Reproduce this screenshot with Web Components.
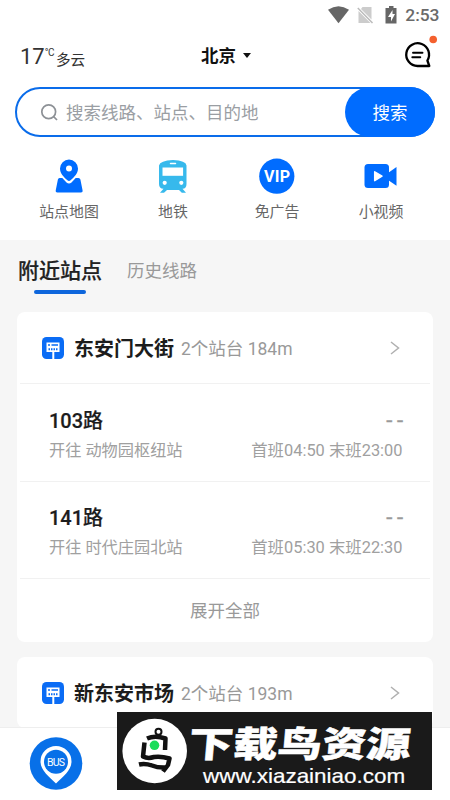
<!DOCTYPE html>
<html lang="zh-CN">
<head>
<meta charset="utf-8">
<title>附近站点</title>
<style>
body{margin:0;width:450px;height:800px;overflow:hidden;background:#fff;font-family:Roboto,"Noto Sans CJK SC",sans-serif}
</style>
</head>
<body>
<bus-app></bus-app>
<script>
const define=(name,html)=>{
  const t=document.createElement('template');
  customElements.define(name,class extends HTMLElement{
    constructor(){
      super();
      t.innerHTML=html;
      this.attachShadow({mode:'open'}).append(t.content.cloneNode(true));
    }
  });
};

define('status-bar',`<style>
:host{display:flex;height:30px;box-sizing:border-box;padding:0 10.5px 0 0;justify-content:flex-end;align-items:center;color:#6a6a6a;font-size:17.4px;font-weight:500;line-height:30px}
svg{display:block}
span{margin:0 0 0 7px}
</style>
<svg width="70" height="30" viewBox="328 0 70 30"><path d="M328 9.800Q338.500 2.500 349 9.800L338.500 23.200Z" fill="#666"/><path d="M362.500 7H371.500v12.500L361 9Z M358.500 11L370.500 23H358.500Z" fill="#ccc"/><path d="M357.800 8L372.500 23" stroke="#bbb" stroke-width="1.500"/><path d="M389 6h4.500v2h3v15.500H385.500V8h3.500Z" fill="#666"/><path d="M392.500 10l-4.500 7h3v4.500l4-7.500h-2.500Z" fill="#fff"/></svg><span>2:53</span>`);

define('city-header',`<style>
:host{display:grid;grid-template-columns:1fr auto 1fr;height:57px;align-items:center;padding:0 12px 0 20px;box-sizing:border-box;color:#333}
.w{display:flex;align-items:flex-end;height:42px;line-height:30px;margin-top:-10px}
.t{font-size:22px;line-height:36px}.c{font:10px/26px Roboto,sans-serif;margin:0 1.500px 9px 0;display:flex}.c i{font-style:normal;letter-spacing:-.5px}.d{font-size:14.6px;line-height:27px;margin-bottom:1px}
.city{display:flex;align-items:center;gap:7px;font-size:17.5px;font-weight:700;color:#111;line-height:26px;margin:-6px 6px 0 0}
.m{justify-self:end}
svg{display:block}
</style>
<div class="w"><span class="t">17</span><span class="c"><i>°</i>C</span><span class="d">多云</span></div>
<div class="city"><span>北京</span><svg width="8" height="5"><path d="M0 0h8L4 5Z" fill="#111"/></svg></div>
<svg class="m" width="35" height="57" viewBox="403 30 35 57"><path d="M417.500 66A11.400 11.400 0 1 1 427.400 60.500L429.300 66Z" fill="none" stroke="#000" stroke-width="2.300" stroke-linejoin="round"/><path d="M413 52.700h9.500M412.300 57.200h8" stroke="#000" stroke-width="1.900" stroke-linecap="round"/><circle cx="433.200" cy="39.500" r="3.800" fill="#f4602e"/></svg>`);

define('search-box',`<style>
:host{display:flex;box-sizing:border-box;margin:0 15px;height:50px;border:2px solid #0a6cea;border-radius:25px;align-items:center;color:#9a9ea3;font-size:17.5px;line-height:26px}
svg{margin:1px 7px 0 23px}
span{flex:1;margin-top:2px}
button{width:90px;height:50px;margin:-2px;border:0;border-radius:25px;background:#006cff;color:#fff;font:inherit;padding:2px 0 0}
</style>
<svg width="19" height="19" viewBox="0 0 19 19" fill="none" stroke="#8d9196" stroke-width="1.700"><circle cx="8.700" cy="8.700" r="6.900"/><path d="M13.500 13.500L17 17"/></svg><span>搜索线路、站点、目的地</span><button>搜索</button>`);

define('quick-link',`<style>
:host{display:flex;flex-direction:column;align-items:center;width:104px;color:#666;font-size:14.9px;line-height:22px}
::slotted(svg){display:block}
span{margin-top:3px}
</style><slot name="icon"></slot><span><slot></slot></span>`);

define('quick-links',`<style>
:host{display:flex;padding:20px 17px 0;height:83px;width:416px}
svg text{font:700 16px Roboto,sans-serif}
</style>
<quick-link><svg slot="icon" width="40" height="41" viewBox="49 157 40 41"><path fill="#006cff" d="M59.500 178H78.500q1.500 0 1.900 1.600l2.200 10.900q.4 2-1.600 2H57.300q-2 0-1.600-2l2.200-10.900q.300-1.600 1.600-1.600Z"/><path d="M60 175.500L66.500 182.500Q69 184.500 71.500 182.500L78 175.500Z" fill="#fff"/><path fill="#006cff" fill-rule="evenodd" d="M69 159.600a9 9 0 0 0-9 9c0 5 3.600 8.300 7.400 11.700q1.600 1.300 3.200 0c3.800-3.400 7.400-6.700 7.400-11.700A9 9 0 0 0 69 159.600Zm0 6a3 3 0 1 1 0 6a3 3 0 0 1 0-6Z"/></svg>站点地图</quick-link>
<quick-link><svg slot="icon" width="40" height="41" viewBox="153 157 40 41"><path fill="#37b9ec" fill-rule="evenodd" d="M159 165.500Q160 160.500 173 160Q186 160.500 186.500 165.500V184Q186.500 188.500 182.500 188.800L186 192.800H181.800L179 190H167L164 192.800H160L163.500 188.800Q159 188.500 159 184Z"/><path d="M162.500 167.500h20.600v8.300h-20.600Z" fill="#fff"/><path d="M170.500 163.600h5" stroke="#fff" stroke-width="1.500" stroke-linecap="round"/><circle cx="164.700" cy="182.800" r="2.100" fill="#fff"/><circle cx="181.300" cy="182.800" r="2.100" fill="#fff"/></svg>地铁</quick-link>
<quick-link><svg slot="icon" width="40" height="41" viewBox="257 157 40 41"><circle cx="276.800" cy="176.200" r="17.600" fill="#006cff"/><text x="264" y="182" textLength="26" fill="#fff">VIP</text></svg>免广告</quick-link>
<quick-link><svg slot="icon" width="40" height="41" viewBox="361 157 40 41"><rect x="364.500" y="164" width="24.500" height="24" rx="3.500" fill="#006cff"/><path d="M388 173L396.500 167V185.700L388 180Z" fill="#006cff"/><path d="M374.700 171.800L382 176.200L374.700 180.700Z" fill="#fff" stroke="#fff" stroke-width="1.500" stroke-linejoin="round"/></svg>小视频</quick-link>`);

define('tab-strip',`<style>
:host{display:flex;height:72px;box-sizing:border-box;padding:16px 18px 0;gap:25px;color:#999;font-size:17.5px;line-height:30px}
.on{color:#222;font-size:21px;font-weight:500;display:flex;flex-direction:column;align-items:center;-webkit-text-stroke:.2px}
.on::after{content:"";width:52px;height:3.500px;border-radius:2px;background:#0e66dc;margin-top:4px}
</style><div class="on">附近站点</div><div>历史线路</div>`);

define('station-card',`<style>
:host{display:block;margin:0 17px 15px;background:#fff;border-radius:8px}
.h{display:flex;height:71px;align-items:center;padding:0 32px 0 25px}
b{font-size:20px;font-weight:700;color:#1c1c1c;margin:3px 7px 0 10px;line-height:30px}
.i{flex:1;font-size:17.500px;line-height:30px;color:#999;margin-top:3px}
svg{display:block;margin-top:1px}
</style>
<div class="h"><svg width="22" height="22"><rect width="22" height="22" rx="4.500" fill="#0a6cf5"/><path d="M4.500 5.500h13v9.500H12.300V22h-2V15H4.500Z" fill="#fff"/><path d="M6 8h2M9.500 8h6.500" stroke="#0a6cf5" stroke-width="1.700"/><path d="M6.500 12.300h9.500" stroke="#0a6cf5" stroke-width="2" stroke-dasharray="1.500 1"/></svg><b><slot name="name"></slot></b><span class="i"><slot name="info"></slot></span><svg width="12" height="16" fill="none" stroke="#b0b0b0" stroke-width="1.500"><path d="M2 2l7.500 6l-7.500 6"/></svg></div>
<slot></slot>`);

define('bus-line',`<style>
:host{display:grid;grid-template-columns:auto auto;justify-content:space-between;align-content:start;height:97.500px;box-sizing:border-box;margin:0 3px;padding:21.500px 27.5px 0 29px;border-top:1px solid #f1f1f1;color:#a0a0a0;font-size:16.2px;line-height:30px}
.n{font-size:20px;font-weight:500;color:#1c1c1c;-webkit-text-stroke:.2px}
.e{display:flex;justify-content:flex-end;font-size:22px;letter-spacing:4.500px;margin-right:-5px;color:#999;-webkit-text-stroke:.4px}
.h{font-size:16.400px}
</style><span class="n"><slot></slot></span><span class="e">--</span><span><slot name="to"></slot></span><span class="h"><slot name="hours"></slot></span>`);

define('expand-row',`<style>
:host{display:block;height:64px;margin:0 3px;border-top:1px solid #f1f1f1;text-align:center;font-size:17.5px;line-height:65px;color:#999;box-sizing:border-box}
</style><slot></slot>`);

define('bottom-nav',`<style>
:host{display:flex;position:absolute;left:0;top:727px;width:450px;height:73px;background:#fff;border-top:1px solid #eee;box-sizing:border-box;padding:9px 29px}
text{font:10.500px Roboto,sans-serif}
</style><svg width="54" height="54"><circle cx="27" cy="26.500" r="26.300" fill="#0870e8"/><path d="M27 9A15.500 15.500 0 0 0 11.500 24.500C11.500 33.500 20 39.500 27 46.500C34 39.500 42.500 33.500 42.500 24.500A15.500 15.500 0 0 0 27 9Z" fill="#fff"/><circle cx="27" cy="24.800" r="12" fill="#0870e8"/><text x="18" y="28.600" fill="#fff" textLength="18">BUS</text></svg>`);

define('site-badge',`<style>
:host{display:flex;position:absolute;left:117px;top:712px;width:315px;height:78px;background:#1a1a1a;color:#fff;align-items:center}
svg{display:block;margin-left:5px;flex:none}
.x{width:224px;display:flex;flex-direction:column;align-items:center;white-space:nowrap;padding-top:11px}
.t{font-size:35.500px;font-weight:900;line-height:40px;transform:scaleX(1.25) skewX(-4deg);-webkit-text-stroke:.5px #fff}
.u{font:20.700px/26px "Liberation Sans",sans-serif;transform:scaleX(1.085);-webkit-text-stroke:.2px;margin:-2px 0 0 8px}
</style><svg width="66" height="66" viewBox="122 719 66 66"><circle cx="154.700" cy="752" r="32.300" fill="#fff"/><g fill="none" stroke="#111" stroke-width="4.500" stroke-linejoin="round"><circle cx="158.500" cy="732.800" r="3" stroke-width="2"/><path d="M147 739.500Q155 736 165.500 739.500L165 751M144.500 743.500L143 757.500Q148 760 154 758Q161 757 169.500 759.500L168 766L163 772.500M139 765.500Q145 764 152 766.500Q158 769 166 768.500"/></g><circle cx="154.500" cy="746.300" r="4.800" fill="#19dd59"/></svg><div class="x"><span class="t">下载鸟资源</span><span class="u">www.xiazainiao.com</span></div>`);

define('bus-app',`<style>
:host{display:block;width:450px;height:800px;position:relative;overflow:hidden}
main{display:block;height:560px;background:#f6f6f6;overflow:hidden}
</style>
<status-bar></status-bar><city-header></city-header><search-box></search-box>
<quick-links></quick-links>
<main><tab-strip></tab-strip>
<station-card><span slot="name">东安门大街</span><span slot="info">2个站台 184m</span>
<bus-line>103路<span slot="to">开往 动物园枢纽站</span><span slot="hours">首班04:50 末班23:00</span></bus-line>
<bus-line>141路<span slot="to">开往 时代庄园北站</span><span slot="hours">首班05:30 末班22:30</span></bus-line>
<expand-row>展开全部</expand-row></station-card>
<station-card><span slot="name">新东安市场</span><span slot="info">2个站台 193m</span></station-card></main>
<bottom-nav></bottom-nav><site-badge></site-badge>`);
</script>
</body>
</html>
